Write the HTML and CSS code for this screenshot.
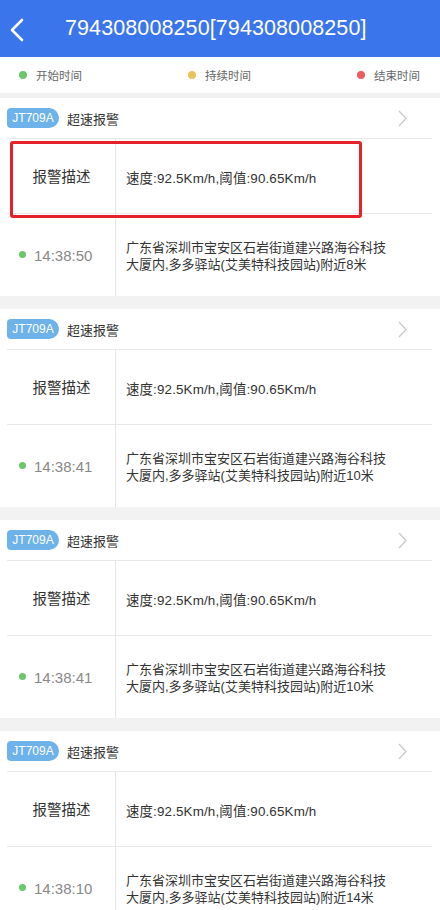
FILE: index.html
```html
<!DOCTYPE html>
<html lang="zh-CN">
<head>
<meta charset="utf-8">
<title>报警列表</title>
<link rel="stylesheet" href="styles.css">
</head>
<body>
<header class="topbar">
  <svg class="back" width="16" height="24" viewBox="0 0 16 24"><polyline points="13,2 3,12 13,22" fill="none" stroke="#fff" stroke-width="2.6" stroke-linecap="round" stroke-linejoin="round"/></svg>
  <h1 class="title">794308008250[794308008250]</h1>
</header>
<div class="legend">
  <div class="legend-item"><span class="dot green"></span>开始时间</div>
  <div class="legend-item"><span class="dot yellow"></span>持续时间</div>
  <div class="legend-item"><span class="dot red"></span>结束时间</div>
</div>
<main class="list">
  <section class="card">
    <div class="card-head">
      <span class="badge">JT709A</span>
      <span class="alarm">超速报警</span>
      <svg class="chev" width="12" height="17" viewBox="0 0 12 17"><polyline points="2,1 9,8.5 2,16" fill="none" stroke="#c9c9c9" stroke-width="1.3"/></svg>
    </div>
    <div class="row row-desc">
      <div class="cell-left label">报警描述</div>
      <div class="cell-right desc">速度:92.5Km/h,阈值:90.65Km/h</div>
    </div>
    <div class="row row-addr">
      <div class="cell-left time"><span class="dot green small"></span>14:38:50</div>
      <div class="cell-right addr">广东省深圳市宝安区石岩街道建兴路海谷科技<br>大厦内,多多驿站(艾美特科技园站)附近8米</div>
    </div>
    <div class="highlight"></div>
  </section>
  <section class="card">
    <div class="card-head">
      <span class="badge">JT709A</span>
      <span class="alarm">超速报警</span>
      <svg class="chev" width="12" height="17" viewBox="0 0 12 17"><polyline points="2,1 9,8.5 2,16" fill="none" stroke="#c9c9c9" stroke-width="1.3"/></svg>
    </div>
    <div class="row row-desc">
      <div class="cell-left label">报警描述</div>
      <div class="cell-right desc">速度:92.5Km/h,阈值:90.65Km/h</div>
    </div>
    <div class="row row-addr">
      <div class="cell-left time"><span class="dot green small"></span>14:38:41</div>
      <div class="cell-right addr">广东省深圳市宝安区石岩街道建兴路海谷科技<br>大厦内,多多驿站(艾美特科技园站)附近10米</div>
    </div>
  </section>
  <section class="card">
    <div class="card-head">
      <span class="badge">JT709A</span>
      <span class="alarm">超速报警</span>
      <svg class="chev" width="12" height="17" viewBox="0 0 12 17"><polyline points="2,1 9,8.5 2,16" fill="none" stroke="#c9c9c9" stroke-width="1.3"/></svg>
    </div>
    <div class="row row-desc">
      <div class="cell-left label">报警描述</div>
      <div class="cell-right desc">速度:92.5Km/h,阈值:90.65Km/h</div>
    </div>
    <div class="row row-addr">
      <div class="cell-left time"><span class="dot green small"></span>14:38:41</div>
      <div class="cell-right addr">广东省深圳市宝安区石岩街道建兴路海谷科技<br>大厦内,多多驿站(艾美特科技园站)附近10米</div>
    </div>
  </section>
  <section class="card">
    <div class="card-head">
      <span class="badge">JT709A</span>
      <span class="alarm">超速报警</span>
      <svg class="chev" width="12" height="17" viewBox="0 0 12 17"><polyline points="2,1 9,8.5 2,16" fill="none" stroke="#c9c9c9" stroke-width="1.3"/></svg>
    </div>
    <div class="row row-desc">
      <div class="cell-left label">报警描述</div>
      <div class="cell-right desc">速度:92.5Km/h,阈值:90.65Km/h</div>
    </div>
    <div class="row row-addr">
      <div class="cell-left time"><span class="dot green small"></span>14:38:10</div>
      <div class="cell-right addr">广东省深圳市宝安区石岩街道建兴路海谷科技<br>大厦内,多多驿站(艾美特科技园站)附近14米</div>
    </div>
  </section>
</main>
</body>
</html>
```
FILE: styles.css
```css
* { box-sizing: border-box; }
html, body { margin: 0; padding: 0; }
body {
  background: #f2f2f2;
  font-family: "Liberation Sans", Arial, "Noto Sans CJK SC", sans-serif;
  color: #333;
  width: 440px;
  height: 910px;
  overflow: hidden;
}
.topbar {
  height: 57px;
  background: #3b75ec;
  display: flex;
  align-items: center;
  padding-left: 9px;
}
.back { display: block; margin-top: 2px; }
.title {
  margin: 0 0 0 40px;
  font-size: 21.5px;
  font-weight: normal;
  color: #fff;
  letter-spacing: 0.1px;
}
.legend {
  height: 36px;
  background: #fff;
  display: flex;
  align-items: center;
  justify-content: space-between;
  padding: 0 20px 0 19px;
  font-family: "Noto Sans CJK SC", sans-serif;
  font-size: 11.5px;
  color: #666;
}
.legend-item { display: flex; align-items: center; }
.dot {
  display: inline-block;
  width: 8px;
  height: 8px;
  border-radius: 50%;
  margin-right: 9px;
}
.dot.green { background: #6cc76c; }
.dot.yellow { background: #e9c25b; }
.dot.red { background: #ec5d5d; }
.list {
  display: flex;
  flex-direction: column;
  gap: 13px;
  padding-top: 5px;
}
.card {
  background: #fff;
  position: relative;
}
.card-head {
  height: 40px;
  display: flex;
  align-items: center;
  padding-left: 7px;
}
.badge {
  width: 52px;
  height: 20px;
  background: #6db2e8;
  color: #fff;
  font-size: 12px;
  line-height: 20px;
  text-align: center;
  border-radius: 4px 10px 10px 4px;
}
.alarm {
  margin-left: 8px;
  font-family: "Noto Sans CJK SC", sans-serif;
  font-size: 13px;
  color: #333;
}
.chev { margin-left: auto; margin-right: 31px; }
.row {
  display: grid;
  grid-template-columns: 116px 1fr;
  position: relative;
}
.row::before {
  content: "";
  position: absolute;
  top: 0;
  left: 7px;
  right: 8px;
  height: 1px;
  background: #e8e8e8;
}
.row-desc { height: 75px; }
.row-addr { height: 83px; }
.cell-left {
  border-right: 1px solid #e6e6e6;
  display: flex;
  align-items: center;
  justify-content: center;
}
.cell-right {
  display: flex;
  align-items: center;
  padding-left: 10px;
  font-family: "Liberation Sans", Arial, "Noto Sans CJK SC", sans-serif;
  font-size: 13px;
  color: #333;
}
.label {
  font-family: "Noto Sans CJK SC", sans-serif;
  font-size: 14.5px;
  color: #333;
  padding-left: 8px;
}
.desc {
  padding-top: 2px;
  font-size: 13.4px;
  letter-spacing: 0.15px;
}
.time {
  justify-content: flex-start;
  padding-left: 19px;
  font-size: 15px;
  color: #888;
  padding-top: 2px;
}
.dot.small { width: 7px; height: 7px; margin-right: 8px; margin-top: -3px; }
.addr {
  line-height: 17px;
  padding-top: 2px;
}
.highlight {
  position: absolute;
  left: 10px;
  top: 43px;
  width: 352px;
  height: 77px;
  border: 3px solid #e8202a;
  border-radius: 3px;
}
```
